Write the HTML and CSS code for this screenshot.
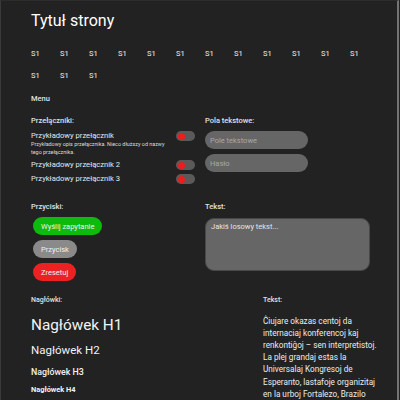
FILE: index.html
```html
<!DOCTYPE html>
<html lang="pl">
<head>
<meta charset="utf-8">
<title>Tytuł strony</title>
<link rel="stylesheet" href="styles.css">
</head>
<body>
<div class="page">
  <h1 class="title">Tytuł strony</h1>
  <nav class="nav">
    <a class="nav-link">S1</a><a class="nav-link">S1</a><a class="nav-link">S1</a><a class="nav-link">S1</a><a class="nav-link">S1</a><a class="nav-link">S1</a><a class="nav-link">S1</a><a class="nav-link">S1</a><a class="nav-link">S1</a><a class="nav-link">S1</a><a class="nav-link">S1</a><a class="nav-link">S1</a><a class="nav-link">S1</a><a class="nav-link">S1</a><a class="nav-link">S1</a>
  </nav>
  <div class="menu">Menu</div>

  <section class="grid grid-top">
    <div class="col switches">
      <div class="label">Przełączniki:</div>
      <div class="switch-row">
        <div class="switch-text">
          <div class="switch-name">Przykładowy przełącznik</div>
          <div class="switch-desc">Przykładowy opis przełącznika. Nieco dłuższy od nazwy tego przełącznika.</div>
        </div>
        <span class="toggle"><span class="knob"></span></span>
      </div>
      <div class="switch-row">
        <div class="switch-text"><div class="switch-name">Przykładowy przełącznik 2</div></div>
        <span class="toggle"><span class="knob"></span></span>
      </div>
      <div class="switch-row">
        <div class="switch-text"><div class="switch-name">Przykładowy przełącznik 3</div></div>
        <span class="toggle"><span class="knob"></span></span>
      </div>
    </div>
    <div class="col inputs">
      <div class="label">Pola tekstowe:</div>
      <input class="field" type="text" placeholder="Pole tekstowe">
      <input class="field" type="password" placeholder="Hasło">
    </div>
  </section>

  <section class="grid grid-mid">
    <div class="col buttons">
      <div class="label">Przyciski:</div>
      <button class="btn btn-green">Wyślij zapytanie</button>
      <button class="btn btn-gray">Przycisk</button>
      <button class="btn btn-red">Zresetuj</button>
    </div>
    <div class="col">
      <div class="label">Tekst:</div>
      <textarea class="area">Jakiś losowy tekst...</textarea>
    </div>
  </section>

  <section class="grid grid-bottom">
    <div class="col">
      <div class="label small">Nagłówki:</div>
      <h1 class="h h1">Nagłówek H1</h1>
      <h2 class="h h2">Nagłówek H2</h2>
      <h3 class="h h3">Nagłówek H3</h3>
      <h4 class="h h4">Nagłówek H4</h4>
    </div>
    <div class="col">
      <div class="label small">Tekst:</div>
      <p class="para">Ĉiujare okazas centoj da internaciaj konferencoj kaj renkontiĝoj – sen interpretistoj. La plej grandaj estas la Universalaj Kongresoj de Esperanto, lastafoje organizitaj en la urboj Fortalezo, Brazilo</p>
    </div>
  </section>
</div>
</body>
</html>
```

FILE: styles.css
```css
html, body {
  margin: 0;
  padding: 0;
  background: #222222;
  height: 400px;
  overflow: hidden;
}

body {
  font-family: Roboto, "Noto Sans", sans-serif;
  color: #e6e6e6;
}

.page {
  box-sizing: border-box;
  width: 399px;
  height: 400px;
  border-left: 1px solid #3a3a3a;
  border-top: 1px solid #2c2c2c;
  border-right: 2px solid #747474;
  padding: 10px 15px 0 30px;
  overflow: hidden;
}

.title {
  margin: 0;
  font-size: 16px;
  line-height: 20px;
  font-weight: 400;
  color: #ffffff;
}

.nav {
  display: flex;
  flex-wrap: wrap;
  column-gap: 21px;
  row-gap: 10px;
  margin-top: 17px;
}

.nav-link {
  width: 8px;
  font-size: 7.5px;
  line-height: 12px;
  font-weight: 500;
  color: #d2d2d2;
  white-space: nowrap;
}

.menu {
  margin-top: 11px;
  font-size: 7.5px;
  line-height: 12px;
  font-weight: 500;
  color: #e0e0e0;
}

.grid {
  display: grid;
}

.grid-top {
  grid-template-columns: 174px 1fr;
  margin-top: 10px;
}

.grid-mid {
  grid-template-columns: 174px 1fr;
  margin-top: 17px;
}

.grid-bottom {
  grid-template-columns: 232px 1fr;
  margin-top: 14px;
}

.col {
  display: flex;
  flex-direction: column;
  align-items: flex-start;
}

.label {
  font-size: 7.5px;
  line-height: 12px;
  font-weight: 500;
  color: #e0e0e0;
}

.label.small {
  font-size: 7px;
  line-height: 11px;
}

.switches {
  padding-right: 10px;
  align-items: stretch;
}

.switch-row {
  display: flex;
  justify-content: space-between;
  align-items: flex-start;
  margin-top: 4px;
}

.switch-text {
  display: flex;
  flex-direction: column;
}

.switch-name {
  font-size: 7.6px;
  line-height: 10px;
  color: #e6e6e6;
}

.switch-desc {
  font-size: 5.4px;
  line-height: 7.5px;
  color: #dcdcdc;
  width: 144px;
}

.toggle {
  box-sizing: border-box;
  width: 19px;
  height: 10px;
  border-radius: 5px;
  background: #5a5a5a;
  display: flex;
  align-items: center;
  padding-left: 1.5px;
  flex: none;
}

.knob {
  width: 7px;
  height: 7px;
  border-radius: 50%;
  background: #ee1c1c;
}

.field {
  box-sizing: border-box;
  width: 103px;
  height: 18px;
  margin-top: 4px;
  border: none;
  border-radius: 9px;
  background: #666666;
  padding: 0 5px;
  font-family: Roboto, sans-serif;
  font-size: 7.5px;
  color: #eeeeee;
  outline: none;
}

.field + .field {
  margin-top: 5px;
}

.field::placeholder {
  color: #a8a8a8;
}

.buttons .btn {
  margin-left: 2px;
}

.btn {
  box-sizing: border-box;
  height: 18px;
  margin-top: 4px;
  padding: 0 8px;
  border: none;
  border-radius: 9px;
  font-family: Roboto, sans-serif;
  font-size: 7.5px;
  color: #f0f0f0;
}

.btn + .btn {
  margin-top: 5px;
}

.btn-green {
  background: #0dbb0d;
}

.btn-gray {
  background: #8a8a8a;
}

.btn-red {
  background: #ec2222;
}

.area {
  box-sizing: border-box;
  width: 165px;
  height: 53px;
  margin-top: 5px;
  border: 1px solid #484848;
  border-radius: 9px;
  background: #666666;
  padding: 3px 5px;
  font-family: Roboto, sans-serif;
  font-size: 7.5px;
  line-height: 10px;
  color: #e4e4e4;
  resize: none;
  outline: none;
}

.h {
  margin: 0;
  color: #f2f2f2;
}

.h1 {
  font-size: 15.3px;
  line-height: 18px;
  font-weight: 400;
  margin-top: 9.5px;
}

.h2 {
  font-size: 11.5px;
  line-height: 14px;
  font-weight: 400;
  margin-top: 9.5px;
}

.h3 {
  font-size: 8.8px;
  line-height: 12px;
  font-weight: 500;
  margin-top: 8.7px;
}

.h4 {
  font-size: 7.4px;
  line-height: 10px;
  font-weight: 700;
  margin-top: 7.8px;
}

.para {
  margin: 8.5px 0 0;
  width: 122px;
  font-size: 8.2px;
  line-height: 12.2px;
  color: #ececec;
}
```
